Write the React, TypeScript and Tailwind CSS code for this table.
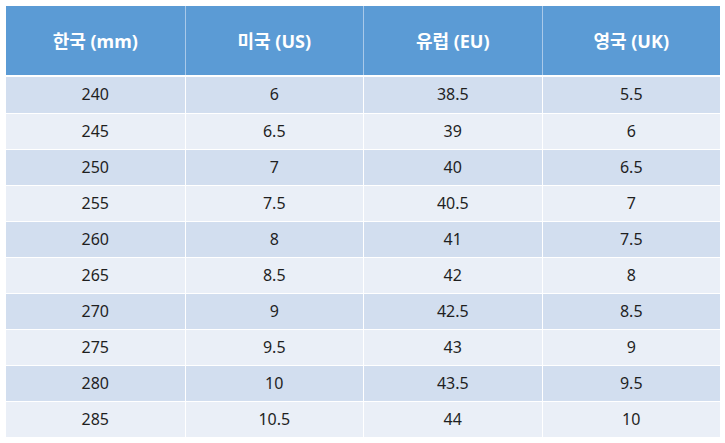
import React from "react";

const headers = ["한국 (mm)", "미국 (US)", "유럽 (EU)", "영국 (UK)"];

const rows: string[][] = [
  ["240", "6", "38.5", "5.5"],
  ["245", "6.5", "39", "6"],
  ["250", "7", "40", "6.5"],
  ["255", "7.5", "40.5", "7"],
  ["260", "8", "41", "7.5"],
  ["265", "8.5", "42", "8"],
  ["270", "9", "42.5", "8.5"],
  ["275", "9.5", "43", "9"],
  ["280", "10", "43.5", "9.5"],
  ["285", "10.5", "44", "10"],
];

export default function App() {
  return (
    <div className="w-[725px] h-[443px] bg-white pt-[6px] pl-[6px] font-['Noto_Sans','Noto_Sans_CJK_KR',sans-serif]">
      <div className="w-[714px] flex flex-col">
        {/* header */}
        <div className="grid grid-cols-4 h-[71px] bg-[#5b9bd5] border-b-2 border-white">
          {headers.map((h, i) => (
            <div
              key={h}
              className={
                "flex items-center justify-center pt-[2px] text-white font-bold text-[18px] " +
                (i > 0 ? "border-l border-[#a9c9e9]" : "")
              }
            >
              {h}
            </div>
          ))}
        </div>

        {rows.map((r, idx) => (
          <div
            key={r[0]}
            className={
              "grid grid-cols-4 h-[36px] " +
              (idx > 0 ? "border-t border-white " : "") +
              (idx % 2 === 0 ? "bg-[#d2deef]" : "bg-[#eaeff7]")
            }
          >
            {r.map((c, i) => (
              <div
                key={i}
                className={
                  "flex items-center justify-center pb-[2px] text-[16px] text-[#1f1f1f] " +
                  (i > 0 ? "border-l border-white" : "")
                }
              >
                {c}
              </div>
            ))}
          </div>
        ))}
      </div>
    </div>
  );
}
